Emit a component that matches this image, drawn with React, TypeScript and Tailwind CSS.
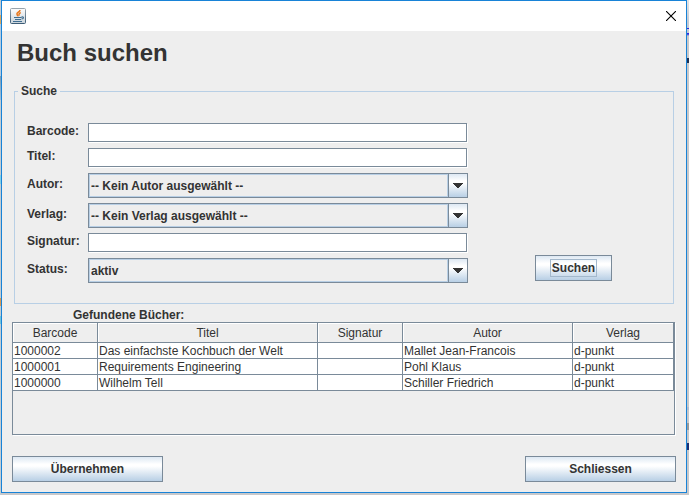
import type { ReactNode } from "react";

type Book = { barcode: string; titel: string; signatur: string; autor: string; verlag: string };

const books: Book[] = [
  { barcode: "1000002", titel: "Das einfachste Kochbuch der Welt", signatur: "", autor: "Mallet Jean-Francois", verlag: "d-punkt" },
  { barcode: "1000001", titel: "Requirements Engineering", signatur: "", autor: "Pohl Klaus", verlag: "d-punkt" },
  { barcode: "1000000", titel: "Wilhelm Tell", signatur: "", autor: "Schiller Friedrich", verlag: "d-punkt" },
];

const metal = "bg-[linear-gradient(to_bottom,#dde8f3_0%,#ffffff_30%,#ffffff_38%,#b8cfe5_100%)]";

// Slivers of the desktop that show on either side of the dialog.
const desktopLeft =
  "bg-[linear-gradient(to_bottom,#c3ccd3_15px,#d9a860_15px,#d9a860_24px,#b5cbe0_24px,#b5cbe0_76px,#7f9db5_76px,#9fc0dc_100px,#c3ccd3_100px,#c3ccd3_175px,#7fd0e8_175px,#7fd0e8_184px,#c3ccd3_184px,#c3ccd3_298px,#d99a55_298px,#d99a55_306px,#c3ccd3_306px,#c3ccd3_316px,#6fc4dc_316px,#6fc4dc_324px,#c3ccd3_324px)]";
const desktopRight =
  "bg-[linear-gradient(to_bottom,#e4e4e4_0px,#c4cad4_22px,#c4cad4_28px,#2a2ae0_28px,#2a2ae0_29px,#c4cad4_29px,#c4cad4_33px,#2a2ae0_33px,#2a2ae0_34px,#c8c8ca_36px,#c8c8ca_58px,#1f3050_58px,#1f3050_63px,#c8c8ca_63px,#c8c8ca_407px,#b4bccb_407px,#b4bccb_410px,#c8c8ca_410px,#c8c8ca_423px,#9a9a9a_423px,#9a9a9a_430px,#c8c8ca_430px,#c8c8ca_443px,#1f3070_443px,#1f3070_450px,#c8c8ca_450px)]";

function JavaIcon() {
  return (
    <svg width="16" height="16" viewBox="0 0 16 16" aria-hidden="true">
      <defs>
        <linearGradient id="tile" x1="0" y1="0" x2="0" y2="1">
          <stop offset="0" stopColor="#fdfdfd" />
          <stop offset="1" stopColor="#c9d3da" />
        </linearGradient>
        <linearGradient id="edge" x1="0" y1="0" x2="0" y2="1">
          <stop offset="0" stopColor="#98a4ad" />
          <stop offset="1" stopColor="#3c5c76" />
        </linearGradient>
      </defs>
      <rect x="0.5" y="0.5" width="15" height="15" rx="1" fill="url(#tile)" stroke="url(#edge)" />
      <path d="M10 2C10.2 4 6 4.600 7 6.400C7.400 7.200 8 7.600 7.600 8.400M10.800 4.600C8.800 5.400 8.600 6.300 9.400 7.600" fill="none" stroke="#e8761a" strokeWidth="1.5" />
      <path d="M4 9.500h7.500M5 11.500h6M3 13.500h9M11.500 9c2.600-.6 2.600 1.800 0 2" fill="none" stroke="#3f6d90" strokeWidth="1.200" />
    </svg>
  );
}

function Label({ htmlFor, children }: { htmlFor: string; children: ReactNode }) {
  return (
    <label htmlFor={htmlFor} className="self-center pb-1">
      {children}
    </label>
  );
}

function TextField({ id, label }: { id: string; label: string }) {
  return (
    <>
      <Label htmlFor={id}>{label}</Label>
      <input
        id={id}
        type="text"
        className="mr-px mb-px h-[19px] min-w-0 border border-[#7a8a99] bg-white px-1 shadow-[1px_1px_0_#ffffff] outline-none"
      />
    </>
  );
}

function SelectField({ id, label, value }: { id: string; label: string; value: string }) {
  return (
    <>
      <Label htmlFor={id}>{label}</Label>
      <div className="relative h-[25px] min-w-0">
        <select
          id={id}
          className="block h-full w-full appearance-none border border-[#7a8a99] bg-[#eeeeee] pr-6 pl-[2px] font-bold shadow-[inset_1px_1px_0_#b8cfe5,inset_0_-1px_0_#b8cfe5] outline-none"
        >
          <option>{value}</option>
        </select>
        <span
          className={`pointer-events-none absolute inset-y-px right-px flex w-[19px] items-center justify-center border-l border-[#7a8a99] shadow-[-1px_0_0_#b8cfe5] ${metal}`}
        >
          <svg width="10" height="5" viewBox="0 0 10 5" shapeRendering="crispEdges" aria-hidden="true">
            <path d="M0 0h10v1h-1v1h-1v1h-1v1h-1v1h-2v-1h-1v-1h-1v-1h-1v-1h-1z" fill="#333333" />
          </svg>
        </span>
      </div>
    </>
  );
}

function Button({ className, children }: { className: string; children: ReactNode }) {
  return (
    <button type="button" className={`flex h-[26px] items-center justify-center border border-[#7a8a99] font-bold ${metal} ${className}`}>
      {children}
    </button>
  );
}

const cell = "h-4 border-r border-b border-[#7a8a99] bg-white p-0 pt-px pl-px leading-[14px] whitespace-nowrap";
const head =
  "h-5 border-r border-b border-[#7a8a99] p-0 pt-px text-center font-normal leading-[18px] shadow-[inset_1px_1px_0_#ffffff]";

export default function App() {
  return (
    <div className="flex min-h-screen bg-[#c8c8ca] font-['Liberation_Sans',Arial,sans-serif] text-[12px] leading-[14px] text-[#333333]">
      <div aria-hidden="true" className={`w-px shrink-0 ${desktopLeft}`} />
      <main className="mb-[2px] flex min-w-0 flex-1 flex-col border border-[#1883d7] bg-[#eeeeee]">
        <header className="flex h-[30px] items-center justify-between bg-white pr-[10px] pl-2">
          <JavaIcon />
          <button type="button" aria-label="Schließen" className="p-0">
            <svg width="10" height="10" viewBox="0 0 10 10" aria-hidden="true">
              <path d="M0 0L10 10M10 0L0 10" stroke="#000000" strokeWidth="1.1" />
            </svg>
          </button>
        </header>

        <div className="flex flex-1 flex-col px-[10px] pt-2 pb-[10px]">
          <h1 className="pl-[5px] text-2xl leading-7 font-bold">Buch suchen</h1>

          <form>
            <fieldset className="mt-[17px] mr-[2px] ml-[2px] border border-[#b8cfe5] pr-[61px] pb-5 pl-3 font-bold">
              <legend className="-ml-[9px] px-[3px]">Suche</legend>
              <div className="flex items-end gap-[67px] pt-[25px]">
                <div className="grid min-w-0 flex-1 grid-cols-[61px_minmax(0,1fr)] gap-y-[5px]">
                  <TextField id="barcode" label="Barcode:" />
                  <TextField id="titel" label="Titel:" />
                  <SelectField id="autor" label="Autor:" value="-- Kein Autor ausgewählt --" />
                  <SelectField id="verlag" label="Verlag:" value="-- Kein Verlag ausgewählt --" />
                  <TextField id="signatur" label="Signatur:" />
                  <SelectField id="status" label="Status:" value="aktiv" />
                </div>
                <Button className="mb-[2px] w-[77px]">
                  <span className="border border-[#a3b8cc] px-px py-px">Suchen</span>
                </Button>
              </div>
            </fieldset>
          </form>

          <h2 id="results" className="mt-1 pl-[61px] font-bold">
            Gefundene Bücher:
          </h2>
          <div className="mr-px flex-1 border border-[#7a8a99] shadow-[1px_1px_0_#ffffff]">
            <table aria-labelledby="results" className="w-full table-fixed border-separate border-spacing-0">
              <colgroup>
                <col className="w-[85px]" />
                <col className="w-[220px]" />
                <col className="w-[85px]" />
                <col className="w-[170px]" />
                <col />
              </colgroup>
              <thead>
                <tr>
                  <th className={head}>Barcode</th>
                  <th className={head}>Titel</th>
                  <th className={head}>Signatur</th>
                  <th className={head}>Autor</th>
                  <th className={head}>Verlag</th>
                </tr>
              </thead>
              <tbody>
                {books.map((b) => (
                  <tr key={b.barcode}>
                    <td className={cell}>{b.barcode}</td>
                    <td className={cell}>{b.titel}</td>
                    <td className={cell}>{b.signatur}</td>
                    <td className={cell}>{b.autor}</td>
                    <td className={cell}>{b.verlag}</td>
                  </tr>
                ))}
              </tbody>
            </table>
          </div>

          <footer className="mt-[21px] flex justify-between">
            <Button className="w-[151px]">Übernehmen</Button>
            <Button className="w-[151px]">Schliessen</Button>
          </footer>
        </div>
      </main>
      <div aria-hidden="true" className={`w-[2px] shrink-0 ${desktopRight}`} />
    </div>
  );
}
